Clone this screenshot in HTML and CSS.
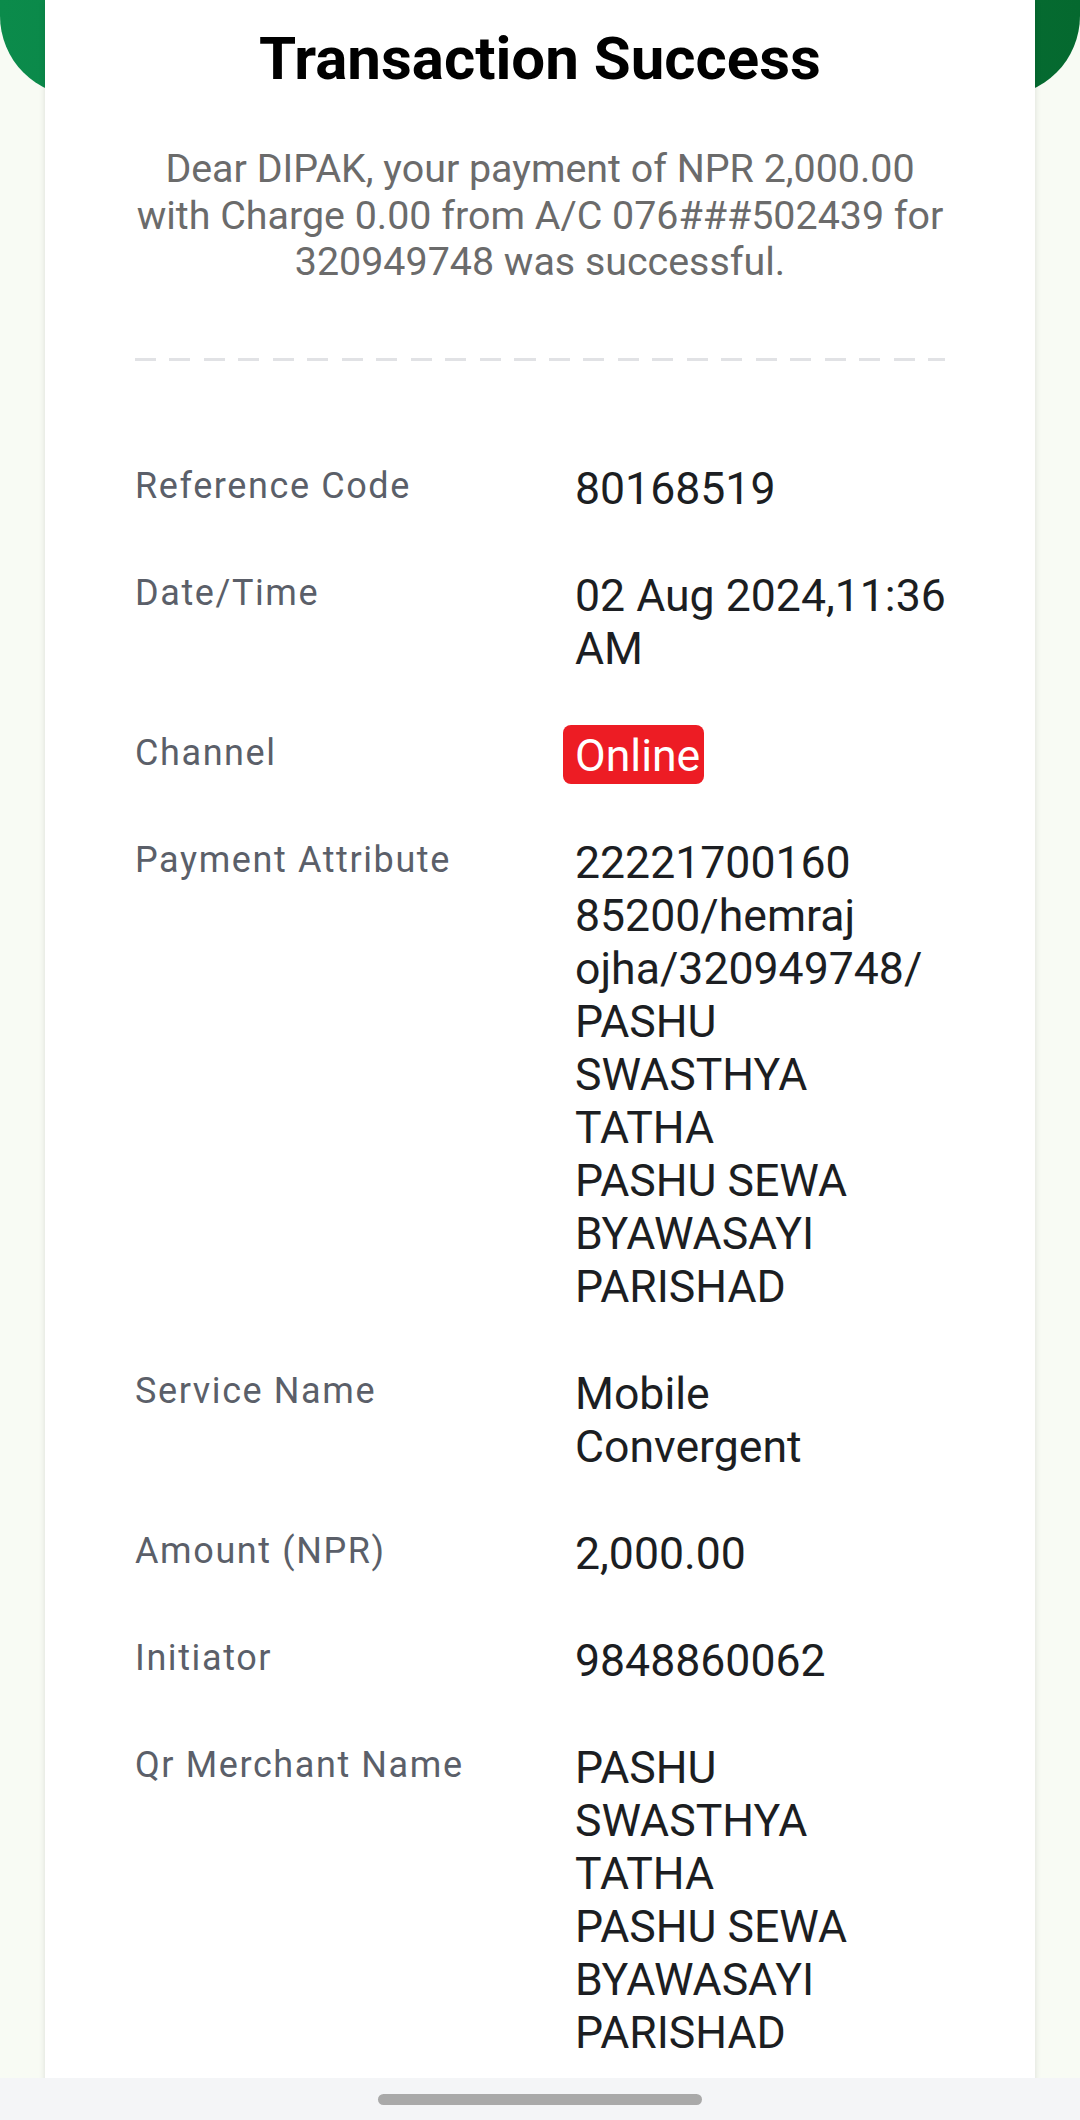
FILE: index.html
```html
<!DOCTYPE html>
<html lang="en">
<head>
    <meta charset="UTF-8">
    <meta name="viewport" content="width=device-width, initial-scale=1.0">
    <title>Transaction Success</title>
    <link rel="stylesheet" href="styles.css">
</head>
<body>
    <div class="screen">
        <div class="scroll">
            <div class="hero"></div>
            <div class="receipt">
                <h1 class="receipt-title">Transaction Success</h1>
                <p class="receipt-message">Dear DIPAK, your payment of NPR 2,000.00 with Charge 0.00 from A/C 076###502439 for 320949748 was successful.</p>
                <div class="divider"></div>

                <dl class="details">
                    <dt>Reference Code</dt>
                    <dd>80168519</dd>

                    <dt>Date/Time</dt>
                    <dd>02 Aug 2024,11:36<br>AM</dd>

                    <dt>Channel</dt>
                    <dd><span class="badge">Online</span></dd>

                    <dt>Payment Attribute</dt>
                    <dd>22221700160<br>85200/hemraj<br>ojha/320949748/<br>PASHU<br>SWASTHYA<br>TATHA<br>PASHU SEWA<br>BYAWASAYI<br>PARISHAD</dd>

                    <dt>Service Name</dt>
                    <dd>Mobile<br>Convergent</dd>

                    <dt>Amount (NPR)</dt>
                    <dd>2,000.00</dd>

                    <dt>Initiator</dt>
                    <dd>9848860062</dd>

                    <dt>Qr Merchant Name</dt>
                    <dd>PASHU<br>SWASTHYA<br>TATHA<br>PASHU SEWA<br>BYAWASAYI<br>PARISHAD</dd>
                </dl>
            </div>
        </div>
        <div class="nav-bar">
            <span class="nav-handle"></span>
        </div>
    </div>
</body>
</html>
```

FILE: styles.css
```css
body {
    margin: 0;
    font-family: Roboto, "Noto Sans", sans-serif;
    background-color: #f8fbf4;
}
.screen {
    height: 2120px;
    display: flex;
    flex-direction: column;
}
.scroll {
    flex: 1;
    overflow: hidden;
}
.hero {
    height: 96px;
    border-radius: 0 0 80px 80px;
    background: linear-gradient(90deg, #0b8b4b, #05692f);
}
.receipt {
    margin: -96px 45px 0;
    padding: 24px 90px 120px;
    background-color: #fff;
    box-shadow: 0 0 6px rgba(0, 0, 0, 0.12);
}
.receipt-title {
    margin: 0;
    font-size: 60px;
    font-weight: 700;
    line-height: 70px;
    color: #000;
    text-align: center;
}
.receipt-message {
    margin: 52px 0 0;
    font-size: 39.4px;
    line-height: 46.5px;
    color: #6b6b6b;
    text-align: center;
}
.divider {
    height: 3px;
    margin-top: 72px;
    background: repeating-linear-gradient(90deg, #e1e2e5 0, #e1e2e5 21px, transparent 21px, transparent 34.5px);
}
.details {
    display: grid;
    grid-template-columns: 440px 1fr;
    row-gap: 54px;
    margin: 102px 0 0;
}
.details dt {
    font-size: 36px;
    line-height: 46px;
    letter-spacing: 1.6px;
    color: #5b5f69;
}
.details dd {
    margin: 0;
    font-size: 44.6px;
    line-height: 53px;
    color: #1c1e22;
    white-space: nowrap;
}
.badge {
    margin-left: -12px;
    padding: 5px 4px 2px 12px;
    border-radius: 8px;
    background-color: #ed1c24;
    color: #fff;
}
.nav-bar {
    height: 42px;
    display: flex;
    align-items: center;
    justify-content: center;
    background-color: #f4f5f7;
}
.nav-handle {
    width: 324px;
    height: 11px;
    border-radius: 6px;
    background-color: #a9a9a9;
}
```
